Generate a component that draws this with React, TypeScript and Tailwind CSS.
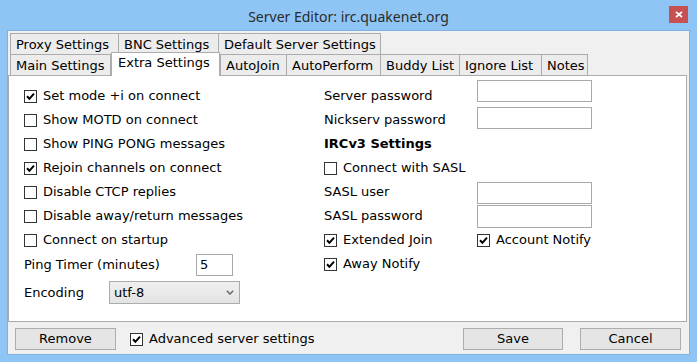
import React from "react";

function Check({ checked }: { checked?: boolean }) {
  return (
    <span className="w-[13px] h-[13px] border border-[#333333] bg-white flex items-center justify-center shrink-0">
      {checked && (
        <svg width="11" height="11" viewBox="0 0 11 11">
          <polyline points="2,5.3 4.4,7.8 9,2.6" fill="none" stroke="#000" strokeWidth="2" />
        </svg>
      )}
    </span>
  );
}

function CheckRow({ label, checked }: { label: string; checked?: boolean }) {
  return (
    <div className="h-[24px] flex items-center gap-[6px]">
      <Check checked={checked} />
      <span>{label}</span>
    </div>
  );
}

function Tab({ label, w, last }: { label: string; w: string; last?: boolean }) {
  return (
    <div
      className={`${w} h-full border-t border-l ${last ? "border-r" : ""} border-[#acacac] bg-[#ececec] pl-[5px] pt-[1px] flex items-center whitespace-nowrap`}
    >
      {label}
    </div>
  );
}

function Field({ cls }: { cls: string }) {
  return <div className={`w-[115px] border border-[#a9a9a9] bg-white ${cls}`} />;
}

export default function App() {
  return (
    <div className="w-[697px] h-[362px] bg-[#8ec5f5] flex flex-col overflow-hidden font-['DejaVu_Sans',sans-serif] text-[13px] text-black">
      {/* title bar */}
      <div className="h-[30px] grid grid-cols-[1fr_auto_1fr] items-center shrink-0">
        <div />
        <div className="font-['Noto_Sans',sans-serif] text-[14px] text-[#2b2b2b] pt-[2px]">
          Server Editor: irc.quakenet.org
        </div>
        <div className="justify-self-end self-start mt-[6px] mr-[9px] w-[19px] h-[17px] bg-[#c75050] flex items-center justify-center">
          <svg width="8" height="7" viewBox="0 0 8 7">
            <path d="M1 0.8 L7 6.2 M7 0.8 L1 6.2" stroke="#fff" strokeWidth="1.8" />
          </svg>
        </div>
      </div>

      {/* window body */}
      <div className="mx-[7px] mb-[7px] flex-1 border border-[#7fb2e2] bg-[#f0f0f0] flex flex-col">
        {/* tabs */}
        <div className="pt-[2px] pl-[2px] flex flex-col">
          <div className="flex h-[21px]">
            <Tab label="Proxy Settings" w="w-[108px]" />
            <Tab label="BNC Settings" w="w-[100px]" />
            <Tab label="Default Server Settings" w="w-[163px]" last />
          </div>
          <div className="flex h-[21px] items-end">
            <Tab label="Main Settings" w="w-[101px]" last />
            <div className="relative z-10 w-[109px] h-[24px] mb-[-1px] border-t border-l border-r border-[#acacac] bg-white pl-[6px] pb-[3px] flex items-center whitespace-nowrap">
              Extra Settings
            </div>
            <Tab label="AutoJoin" w="w-[66px]" />
            <Tab label="AutoPerform" w="w-[94px]" />
            <Tab label="Buddy List" w="w-[79px]" />
            <Tab label="Ignore List" w="w-[82px]" />
            <Tab label="Notes" w="w-[47px]" last />
          </div>
        </div>

        {/* panel */}
        <div className="h-[247px] mr-[2px] border border-[#acacac] bg-white flex pt-[8px] pl-[15px] shrink-0">
          <div className="w-[300px] flex flex-col">
            <CheckRow label="Set mode +i on connect" checked />
            <CheckRow label="Show MOTD on connect" />
            <CheckRow label="Show PING PONG messages" />
            <CheckRow label="Rejoin channels on connect" checked />
            <CheckRow label="Disable CTCP replies" />
            <CheckRow label="Disable away/return messages" />
            <CheckRow label="Connect on startup" />
            <div className="h-[26px] flex items-center">
              <span className="w-[172px]">Ping Timer (minutes)</span>
              <div className="w-[37px] h-[22px] border border-[#a9a9a9] bg-white pl-[3px] flex items-center">5</div>
            </div>
            <div className="mt-[2px] h-[25px] flex items-center">
              <span className="w-[85px]">Encoding</span>
              <div className="w-[131px] h-[23px] border border-[#acacac] bg-gradient-to-b from-[#f0f0f0] to-[#e3e3e3] pl-[4px] pr-[5px] flex items-center justify-between">
                <span>utf-8</span>
                <svg width="8" height="5" viewBox="0 0 8 5">
                  <path d="M0.8 0.8 L4 4 L7.2 0.8" fill="none" stroke="#6a6a6a" strokeWidth="1.5" />
                </svg>
              </div>
            </div>
          </div>

          <div className="flex flex-col">
            <div className="h-[24px] flex items-start">
              <span className="w-[153px] leading-[24px]">Server password</span>
              <Field cls="h-[22px] mt-[-4px]" />
            </div>
            <div className="h-[24px] flex items-start">
              <span className="w-[153px] leading-[24px]">Nickserv password</span>
              <Field cls="h-[22px] mt-[-1px]" />
            </div>
            <div className="h-[24px] flex items-center font-bold">IRCv3 Settings</div>
            <CheckRow label="Connect with SASL" />
            <div className="h-[24px] flex items-start">
              <span className="w-[153px] leading-[24px]">SASL user</span>
              <Field cls="h-[22px] mt-[2px]" />
            </div>
            <div className="h-[24px] flex items-start">
              <span className="w-[153px] leading-[24px]">SASL password</span>
              <Field cls="h-[23px] mt-[1px]" />
            </div>
            <div className="h-[24px] flex items-center">
              <div className="w-[153px] flex items-center gap-[6px]">
                <Check checked />
                <span>Extended Join</span>
              </div>
              <div className="flex items-center gap-[6px]">
                <Check checked />
                <span>Account Notify</span>
              </div>
            </div>
            <CheckRow label="Away Notify" checked />
          </div>
        </div>

        {/* bottom bar */}
        <div className="mt-[6px] pl-[7px] pr-[8px] flex items-start">
          <div className="w-[101px] h-[22px] border border-[#acacac] bg-[#e5e5e5] flex items-center justify-center">
            Remove
          </div>
          <div className="ml-[14px] h-[22px] flex items-center gap-[6px]">
            <Check checked />
            <span>Advanced server settings</span>
          </div>
          <div className="flex-1" />
          <div className="w-[100px] h-[22px] border border-[#acacac] bg-[#e5e5e5] flex items-center justify-center">
            Save
          </div>
          <div className="ml-[17px] w-[101px] h-[22px] border border-[#acacac] bg-[#e5e5e5] flex items-center justify-center">
            Cancel
          </div>
        </div>
      </div>
    </div>
  );
}
